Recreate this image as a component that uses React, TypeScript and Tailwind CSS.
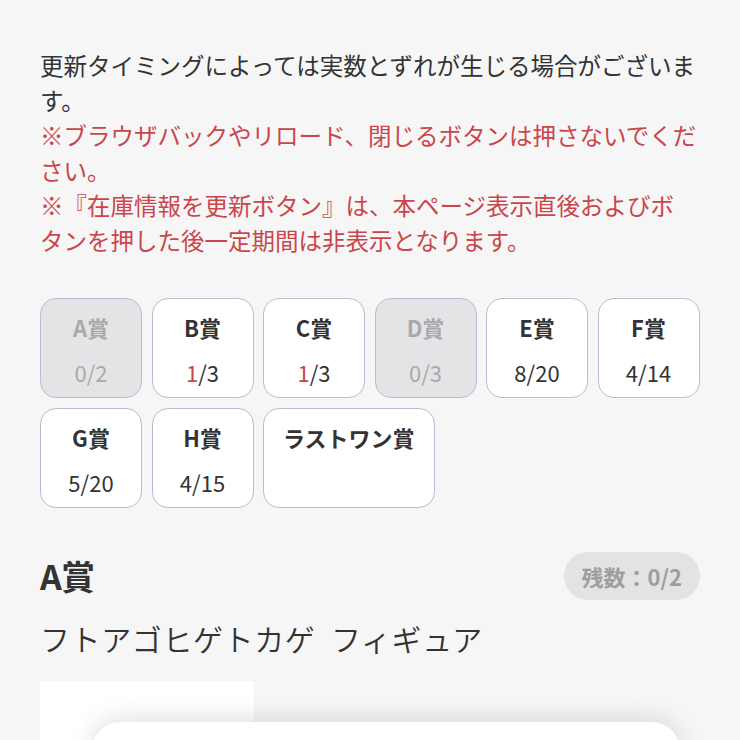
import React from "react";

type Prize = {
    name: string;
    left?: number;
    total?: number;
};

const prizes: Prize[] = [
    { name: "A賞", left: 0, total: 2 },
    { name: "B賞", left: 1, total: 3 },
    { name: "C賞", left: 1, total: 3 },
    { name: "D賞", left: 0, total: 3 },
    { name: "E賞", left: 8, total: 20 },
    { name: "F賞", left: 4, total: 14 },
    { name: "G賞", left: 5, total: 20 },
    { name: "H賞", left: 4, total: 15 },
    { name: "ラストワン賞" },
];

function PrizeCard({ prize }: { prize: Prize }) {
    const soldOut = prize.left === 0;
    const few = prize.left !== undefined && prize.left > 0 && prize.left <= 1;

    return (
        <button
            className={`min-w-[102px] h-[100px] px-[19px] py-3 flex flex-col items-center gap-[13px] rounded-2xl border-[1.5px] border-[#bdbbd2] ${
                soldOut ? "bg-[#e4e4e7] text-[#a9a9ab]" : "bg-white text-[#333]"
            }`}
        >
            <span className="text-[22px] leading-[32px] font-bold">{prize.name}</span>
            {prize.total !== undefined && (
                <span className="text-[22px] leading-[32px]">
                    <span className={few ? "text-[#c9464c]" : ""}>{prize.left}</span>/{prize.total}
                </span>
            )}
        </button>
    );
}

export default function App() {
    return (
        <div
            className="relative w-[740px] h-[740px] overflow-hidden bg-[#f6f6f6] text-[#333]"
            style={{ fontFamily: '"Noto Sans CJK JP", "Noto Sans", sans-serif' }}
        >
            <div className="px-10 pt-12">
                {/* Notes */}
                <div className="text-[23.5px] leading-[35px] [text-spacing-trim:space-all]">
                    <p>更新タイミングによっては実数とずれが生じる場合がございます。</p>
                    <p className="text-[#c9464c]">※ブラウザバックやリロード、閉じるボタンは押さないでください。</p>
                    <p className="text-[#c9464c]">
                        ※『在庫情報を更新ボタン』は、本ページ表示直後およびボ
                        <br />
                        タンを押した後一定期間は非表示となります。
                    </p>
                </div>

                {/* Prize grid */}
                <div className="mt-10 flex flex-wrap gap-x-[9.5px] gap-y-[10px]">
                    {prizes.map((p) => (
                        <PrizeCard key={p.name} prize={p} />
                    ))}
                </div>

                {/* Selected prize */}
                <div className="mt-11 flex items-center justify-between">
                    <h2 className="text-[34px] leading-[48px] font-bold tracking-tight">A賞</h2>
                    <span className="h-12 px-[18px] flex items-center rounded-full bg-[#e3e3e3] text-[#9e9e9e] text-[22px] font-bold">
                        残数：0/2
                    </span>
                </div>
                <p className="mt-[17px] text-[30px] leading-[42px] tracking-[0.6px] font-[350] text-[#333]">
                    フトアゴヒゲトカゲ{"\u2002"}フィギュア
                </p>

                <div className="mt-[22px] w-[214px] h-[80px] bg-white"></div>
            </div>

            {/* Floating sheet */}
            <div className="absolute left-[92px] top-[722px] w-[588px] h-[120px] rounded-[28px] bg-white shadow-[0_-4px_24px_rgba(0,0,0,0.12)]"></div>
        </div>
    );
}
